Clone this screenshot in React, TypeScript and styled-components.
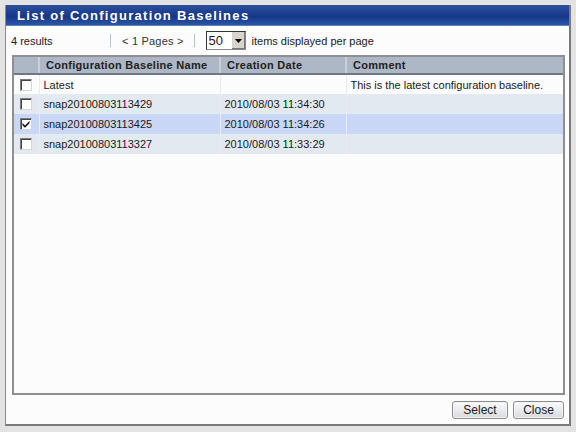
import React from 'react';
import styled, { createGlobalStyle, css } from 'styled-components';

type Baseline = {
  name: string;
  date: string;
  comment: string;
  checked?: boolean;
};

const rows: Baseline[] = [
  { name: 'Latest', date: '', comment: 'This is the latest configuration baseline.' },
  { name: 'snap20100803113429', date: '2010/08/03 11:34:30', comment: '' },
  { name: 'snap20100803113425', date: '2010/08/03 11:34:26', comment: '', checked: true },
  { name: 'snap20100803113327', date: '2010/08/03 11:33:29', comment: '' },
];

const GlobalStyle = createGlobalStyle`
  html, body {
    margin: 0;
    padding: 0;
    background: #e3e3e3;
  }

  body {
    font-family: 'Liberation Sans', Arial, sans-serif;
    font-size: 11px;
    color: #1a1a1a;
  }
`;

const Page = styled.div`
  width: 576px;
  height: 432px;
  box-sizing: border-box;
  padding: 5px 5px 6px 5px;
  background: #e3e3e3;
`;

const Window = styled.div`
  height: 100%;
  box-sizing: border-box;
  display: flex;
  flex-direction: column;
  background: #fcfcfc;
  border-left: 1px solid #8c8c8c;
  border-right: 2px solid #7a7a7a;
  border-bottom: 2px solid #7a7a7a;
`;

const TitleBar = styled.div`
  height: 20px;
  display: flex;
  align-items: center;
  padding-left: 11px;
  background: linear-gradient(to bottom, #2b4f9e 0%, #1c3d8f 45%, #153585 55%, #2a56a8 100%);
  border-bottom: 1px solid #5f7fbf;
  color: #ffffff;
  font-size: 13px;
  font-weight: bold;
  letter-spacing: 1.3px;
`;

const Toolbar = styled.div`
  height: 29px;
  display: flex;
  align-items: center;
  padding-left: 5px;
  font-size: 11px;
`;

const Results = styled.span`
  width: 99px;
`;

const Divider = styled.span`
  width: 1px;
  height: 13px;
  background: #b5c1d3;
`;

const Pager = styled.span`
  padding: 0 10px 0 11px;
  color: #333;
  letter-spacing: 0.2px;
`;

const SelectBox = styled.div`
  margin-left: 11px;
  width: 38px;
  height: 17px;
  display: flex;
  align-items: stretch;
  border: 1px solid #333;
  border-right-color: #888;
  border-bottom-color: #888;
  background: #fff;
  font-size: 13px;
`;

const SelectValue = styled.span`
  flex: 1;
  padding-left: 2px;
  line-height: 17px;
`;

const SelectArrow = styled.span`
  width: 13px;
  display: flex;
  align-items: center;
  justify-content: center;
  background: #d8d4cc;
  border-left: 1px solid #fff;
  box-shadow: inset -1px -1px 0 #777;
`;

const PerPage = styled.span`
  margin-left: 6px;
`;

const TableFrame = styled.div`
  flex: 1;
  margin: 0 4px 0 6px;
  border: 2px solid #8f8f8f;
  background: #fcfcfc;
`;

const Table = styled.table`
  width: 100%;
  border-collapse: collapse;
  table-layout: fixed;
`;

const HeadCell = styled.th<{ $width?: number }>`
  ${({ $width }) => $width && css`width: ${$width}px;`}
  height: 16px;
  padding: 0 0 0 6px;
  text-align: left;
  font-weight: bold;
  color: #222;
  background: #adb7c5;
  border-left: 2px solid #c9d0da;
  border-bottom: 2px solid #6e7886;
  letter-spacing: 0.3px;

  &:first-child {
    border-left: none;
  }
`;

const Row = styled.tr<{ $tone: 'plain' | 'alt' | 'selected' }>`
  height: 20px;
  background: ${({ $tone }) =>
    $tone === 'selected' ? '#c9d6f5' : $tone === 'alt' ? '#e3e9f1' : '#fcfcfc'};
`;

const Cell = styled.td`
  padding: 0 0 0 4px;
  border-left: 1px solid #e8ecf1;
  white-space: nowrap;
  overflow: hidden;

  &:first-child {
    border-left: none;
    padding-left: 6px;
  }
`;

const CheckBox = styled.span`
  display: block;
  width: 10px;
  height: 10px;
  border: 1px solid #7a7a7a;
  border-right-color: #d5d5d5;
  border-bottom-color: #d5d5d5;
  box-shadow: inset 1px 1px 0 #444;
  background: #fff;
  position: relative;
`;

const Footer = styled.div`
  height: 29px;
  display: flex;
  align-items: center;
  justify-content: flex-end;
  gap: 5px;
  padding-right: 5px;
`;

const Button = styled.button<{ $width: number }>`
  width: ${({ $width }) => $width}px;
  height: 18px;
  padding: 0;
  font-family: 'Liberation Sans', Arial, sans-serif;
  font-size: 12px;
  color: #222;
  border: 1px solid #8c8c8c;
  border-radius: 3px;
  background: linear-gradient(to bottom, #fbfbfb 0%, #e9ebee 50%, #d6d9de 100%);
  box-shadow: inset 0 0 0 1px #f4f4f4;
`;

const Check = () => (
  <svg width="10" height="10" viewBox="0 0 10 10" style={{ position: 'absolute', left: 0, top: 0 }}>
    <path d="M1.5 4 L4 6.5 L8.5 2 L8.5 4.2 L4 8.7 L1.5 6.2 Z" fill="#111" />
  </svg>
);

const App = () => (
  <Page>
    <GlobalStyle />
    <Window>
      <TitleBar>List of Configuration Baselines</TitleBar>
      <Toolbar>
        <Results>4 results</Results>
        <Divider />
        <Pager>&lt; 1 Pages &gt;</Pager>
        <Divider />
        <SelectBox>
          <SelectValue>50</SelectValue>
          <SelectArrow>
            <svg width="7" height="4" viewBox="0 0 7 4">
              <path d="M0 0 H7 L3.5 4 Z" fill="#000" />
            </svg>
          </SelectArrow>
        </SelectBox>
        <PerPage>items displayed per page</PerPage>
      </Toolbar>
      <TableFrame>
        <Table>
          <thead>
            <tr>
              <HeadCell $width={18} />
              <HeadCell $width={173}>Configuration Baseline Name</HeadCell>
              <HeadCell $width={118}>Creation Date</HeadCell>
              <HeadCell>Comment</HeadCell>
            </tr>
          </thead>
          <tbody>
            {rows.map((row, i) => (
              <Row key={row.name} $tone={row.checked ? 'selected' : i === 0 ? 'plain' : 'alt'}>
                <Cell>
                  <CheckBox>{row.checked && <Check />}</CheckBox>
                </Cell>
                <Cell>{row.name}</Cell>
                <Cell>{row.date}</Cell>
                <Cell>{row.comment}</Cell>
              </Row>
            ))}
          </tbody>
        </Table>
      </TableFrame>
      <Footer>
        <Button $width={56}>Select</Button>
        <Button $width={51}>Close</Button>
      </Footer>
    </Window>
  </Page>
);

export default App;
